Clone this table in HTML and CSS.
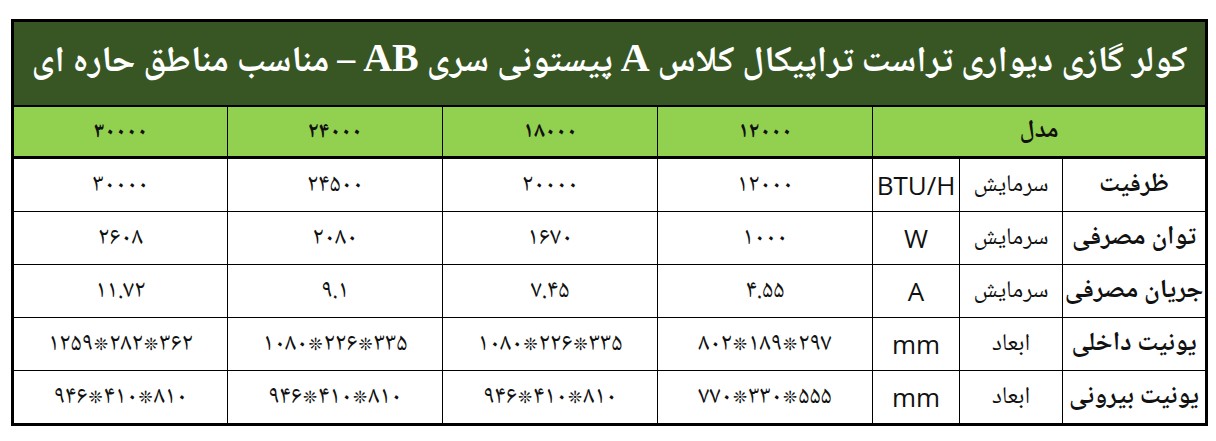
FILE: index.html
```html
<!DOCTYPE html>
<html lang="fa">
<head>
<meta charset="utf-8">
<title>کولر گازی تراست</title>
<link rel="stylesheet" href="styles.css">
</head>
<body>
<div class="page">
<table class="spec" dir="rtl">
<colgroup>
<col class="c-label"><col class="c-sub"><col class="c-unit">
<col class="c-val"><col class="c-val"><col class="c-val"><col class="c-val">
</colgroup>
<thead>
<tr class="title-row"><th colspan="7">کولر گازی دیواری تراست تراپیکال کلاس <span class="latin">A</span> پیستونی سری <span class="latin">AB</span> – مناسب مناطق حاره ای</th></tr>
<tr class="head-row"><th colspan="3" class="model">مدل</th><th>۱۲۰۰۰</th><th>۱۸۰۰۰</th><th>۲۴۰۰۰</th><th>۳۰۰۰۰</th></tr>
</thead>
<tbody>
<tr><th class="label">ظرفیت</th><td class="sub">سرمایش</td><td class="unit">BTU/H</td><td class="val">۱۲۰۰۰</td><td class="val">۲۰۰۰۰</td><td class="val">۲۴۵۰۰</td><td class="val">۳۰۰۰۰</td></tr>
<tr><th class="label">توان مصرفی</th><td class="sub">سرمایش</td><td class="unit">W</td><td class="val">۱۰۰۰</td><td class="val">۱۶۷۰</td><td class="val">۲۰۸۰</td><td class="val">۲۶۰۸</td></tr>
<tr><th class="label">جریان مصرفی</th><td class="sub">سرمایش</td><td class="unit">A</td><td class="val">۴.۵۵</td><td class="val">۷.۴۵</td><td class="val">۹.۱</td><td class="val">۱۱.۷۲</td></tr>
<tr><th class="label">یونیت داخلی</th><td class="sub">ابعاد</td><td class="unit">mm</td><td class="val"><span class="dims">۸۰۲<i>❊</i>۱۸۹<i>❊</i>۲۹۷</span></td><td class="val"><span class="dims">۱۰۸۰<i>❊</i>۲۲۶<i>❊</i>۳۳۵</span></td><td class="val"><span class="dims">۱۰۸۰<i>❊</i>۲۲۶<i>❊</i>۳۳۵</span></td><td class="val"><span class="dims">۱۲۵۹<i>❊</i>۲۸۲<i>❊</i>۳۶۲</span></td></tr>
<tr><th class="label">یونیت بیرونی</th><td class="sub">ابعاد</td><td class="unit">mm</td><td class="val"><span class="dims">۷۷۰<i>❊</i>۳۳۰<i>❊</i>۵۵۵</span></td><td class="val"><span class="dims">۹۴۶<i>❊</i>۴۱۰<i>❊</i>۸۱۰</span></td><td class="val"><span class="dims">۹۴۶<i>❊</i>۴۱۰<i>❊</i>۸۱۰</span></td><td class="val"><span class="dims">۹۴۶<i>❊</i>۴۱۰<i>❊</i>۸۱۰</span></td></tr>
</tbody>
</table>
</div>
</body>
</html>
```
FILE: styles.css
```css
html, body {
  margin: 0;
  padding: 0;
  background: #ffffff;
}
.page {
  padding: 19px 0 0 11px;
}
.spec {
  width: 1195px;
  table-layout: fixed;
  border-collapse: collapse;
  border: 3px solid #000;
  font-family: "Noto Naskh Arabic", "DejaVu Sans", serif;
  color: #111;
}
.c-label { width: 144px; }
.c-sub { width: 103px; }
.c-unit { width: 87px; }
.c-val { width: 215px; }
.spec th, .spec td {
  border: 1px solid #000;
  text-align: center;
  padding: 0;
  white-space: nowrap;
}
.title-row th {
  background: #375623;
  color: #fff;
  height: 83px;
  font-size: 36px;
  font-weight: bold;
  border-bottom: 2px solid #000;
}
.latin {
  font-family: "Liberation Serif", serif;
  font-weight: bold;
  font-size: 40px;
}
.head-row th {
  background: #92d050;
  height: 49px;
  font-size: 22px;
  font-weight: bold;
  letter-spacing: 1px;
  border-bottom: 3px solid #000;
}
.head-row th.model {
  font-size: 25px;
  letter-spacing: 0;
}
.spec tbody tr { height: 53px; }
.spec tbody tr > * { height: 52px; }
.label {
  font-size: 26px;
  font-weight: bold;
  padding-left: 2px;
}
.sub {
  font-size: 24px;
  font-weight: normal;
}
.unit {
  font-family: "Open Sans", "DejaVu Sans", sans-serif;
  font-size: 26px;
}
.val {
  font-size: 25px;
  letter-spacing: 3px;
}
.dims {
  direction: ltr;
  unicode-bidi: isolate;
  letter-spacing: 1px;
}
.dims i {
  font-style: normal;
  font-size: 17px;
  padding: 0 1px;
}
```
